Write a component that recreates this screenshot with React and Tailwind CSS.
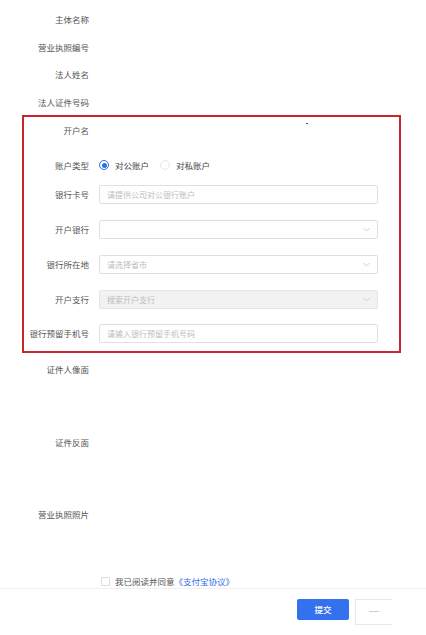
import React from "react";

const topRows = ["主体名称", "营业执照编号", "法人姓名", "法人证件号码"];

function Chevron() {
  return (
    <svg width="7" height="5" viewBox="0 0 7 5" className="mr-[7px]">
      <polyline points="0.5,1 3.5,4 6.5,1" fill="none" stroke="#c8c8c8" strokeWidth="0.9" />
    </svg>
  );
}

function Field({ label, placeholder, select, disabled }) {
  return (
    <div className="flex items-center h-[19px]">
      <div className="w-[65px] text-right text-[8.5px] text-[#555]">{label}</div>
      <div
        className={`ml-[10px] w-[279px] h-[19px] flex items-center justify-between border rounded-[2px] ${
          disabled ? "bg-[#f2f2f2] border-[#e4e4e4]" : "bg-white border-[#e0e0e0]"
        }`}
      >
        <span className="pl-[7px] text-[8px] text-[#bdbdbd]">{placeholder}</span>
        {select && <Chevron />}
      </div>
    </div>
  );
}

export default function App() {
  return (
    <div
      className="relative w-[426px] h-[635px] overflow-hidden bg-white"
      style={{ fontFamily: '"Noto Sans CJK SC", "Noto Sans", sans-serif' }}
    >
      {/* basic info */}
      <div className="pt-[6px]">
        {topRows.map((t) => (
          <div key={t} className="h-[27.5px] flex items-center">
            <div className="w-[89px] text-right text-[8.5px] text-[#555]">{t}</div>
          </div>
        ))}
      </div>

      {/* bank account box */}
      <div className="ml-[22px] mt-[-1px] w-[379px] border-2 border-[#c8262d] pt-[3px] pb-[8px]">
        <div className="h-[20px] flex items-center">
          <div className="w-[65px] text-right text-[8.5px] text-[#555]">开户名</div>
          <div className="ml-[217px] mb-[13px] w-[1.5px] h-[1.5px] rounded-full bg-[#333]"></div>
        </div>

        <div className="mt-[15px] h-[20px] flex items-center">
          <div className="w-[65px] text-right text-[8.5px] text-[#555]">账户类型</div>
          <div className="ml-[10px] flex items-center">
            <span className="w-[10px] h-[10px] rounded-full border border-[#2f6fe6] flex items-center justify-center">
              <span className="w-[5px] h-[5px] rounded-full bg-[#2f6fe6]"></span>
            </span>
            <span className="ml-[6px] text-[8.5px] text-[#444]">对公账户</span>
            <span className="ml-[11px] w-[10px] h-[10px] rounded-full border border-[#e6e6e6]"></span>
            <span className="ml-[6px] text-[8.5px] text-[#444]">对私账户</span>
          </div>
        </div>

        <div className="mt-[10px] flex flex-col gap-[16px]">
          <Field label="银行卡号" placeholder="请提供公司对公银行账户" />
          <Field label="开户银行" placeholder="" select />
          <Field label="银行所在地" placeholder="请选择省市" select />
          <Field label="开户支行" placeholder="搜索开户支行" select disabled />
          <div className="mt-[-1px]">
            <Field label="银行预留手机号" placeholder="请输入银行预留手机号码" />
          </div>
        </div>
      </div>

      {/* uploads */}
      <div className="flex flex-col">
        {["证件人像面", "证件反面", "营业执照照片"].map((t) => (
          <div key={t} className="h-[72.5px] pt-[11px]">
            <div className="w-[89px] text-right text-[8.5px] text-[#555] leading-[10px]">{t}</div>
          </div>
        ))}
      </div>

      {/* agreement */}
      <div className="mt-[6px] ml-[101px] flex items-center h-[10px]">
        <span className="w-[9px] h-[9px] border border-[#dcdcdc] rounded-[1px] bg-white"></span>
        <span className="ml-[5px] text-[8.5px] text-[#555]">我已阅读并同意</span>
        <span className="text-[8.5px] text-[#2f6be6]">《支付宝协议》</span>
      </div>

      {/* footer */}
      <div className="mt-[1px] border-t border-[#f0f0f0] flex justify-end pr-[34px] pt-[10px] gap-[6px]">
        <button className="w-[52px] h-[21px] rounded-[2px] bg-[#3471ef] text-white text-[8.5px] font-medium">
          提交
        </button>
        <div className="w-[37px] h-[26px] border border-[#e8e8e8] border-r-0 bg-white flex items-center justify-center">
          <span className="w-[10px] h-[1px] bg-[#ccc]"></span>
        </div>
      </div>
    </div>
  );
}
